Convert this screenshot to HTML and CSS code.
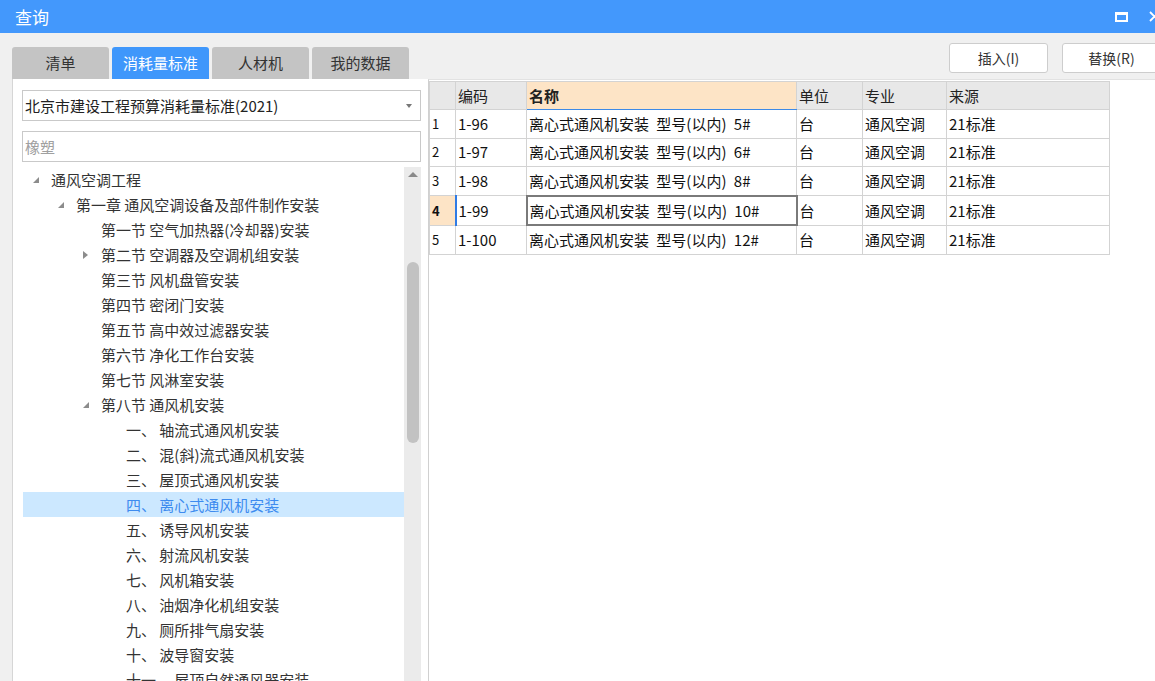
FILE: index.html
```html
<!DOCTYPE html>
<html lang="zh-CN">
<head>
<meta charset="utf-8">
<title>查询</title>
<link rel="stylesheet" href="styles.css">
</head>
<body>
<div class="window">
  <div class="titlebar">
    <span class="title">查询</span>
    <div class="controls">
      <span class="max-icon"></span>
      <svg class="close-icon" width="11" height="11" viewBox="0 0 11 11"><path d="M1 1 L10 10 M10 1 L1 10" stroke="#fff" stroke-width="1.8" fill="none"/></svg>
    </div>
  </div>
  <div class="main">
    <div class="left">
      <div class="tabs">
        <div class="tab">清单</div>
        <div class="tab active">消耗量标准</div>
        <div class="tab">人材机</div>
        <div class="tab">我的数据</div>
      </div>
      <div class="left-panel">
        <div class="select">
          <span>北京市建设工程预算消耗量标准(2021)</span>
          <span class="caret"></span>
        </div>
        <div class="search">橡塑</div>
        <div class="tree-wrap">
          <div class="tree">
            <div class="node l0"><span class="tw"><span class="exp"></span></span>通风空调工程</div>
            <div class="node l1"><span class="tw"><span class="exp"></span></span>第一章 通风空调设备及部件制作安装</div>
            <div class="node l2"><span class="tw"></span>第一节 空气加热器(冷却器)安装</div>
            <div class="node l2"><span class="tw"><span class="col"></span></span>第二节 空调器及空调机组安装</div>
            <div class="node l2"><span class="tw"></span>第三节 风机盘管安装</div>
            <div class="node l2"><span class="tw"></span>第四节 密闭门安装</div>
            <div class="node l2"><span class="tw"></span>第五节 高中效过滤器安装</div>
            <div class="node l2"><span class="tw"></span>第六节 净化工作台安装</div>
            <div class="node l2"><span class="tw"></span>第七节 风淋室安装</div>
            <div class="node l2"><span class="tw"><span class="exp"></span></span>第八节 通风机安装</div>
            <div class="node l3"><span class="tw"></span>一、 轴流式通风机安装</div>
            <div class="node l3"><span class="tw"></span>二、 混(斜)流式通风机安装</div>
            <div class="node l3"><span class="tw"></span>三、 屋顶式通风机安装</div>
            <div class="node l3 selected"><span class="tw"></span>四、 离心式通风机安装</div>
            <div class="node l3"><span class="tw"></span>五、 诱导风机安装</div>
            <div class="node l3"><span class="tw"></span>六、 射流风机安装</div>
            <div class="node l3"><span class="tw"></span>七、 风机箱安装</div>
            <div class="node l3"><span class="tw"></span>八、 油烟净化机组安装</div>
            <div class="node l3"><span class="tw"></span>九、 厕所排气扇安装</div>
            <div class="node l3"><span class="tw"></span>十、 波导窗安装</div>
            <div class="node l3"><span class="tw"></span>十一、 屋顶自然通风器安装</div>
          </div>
          <div class="scrollbar">
            <span class="up"></span>
            <span class="thumb"></span>
          </div>
        </div>
      </div>
    </div>
    <div class="right">
      <div class="toolbar">
        <button class="btn">插入(I)</button>
        <button class="btn">替换(R)</button>
      </div>
      <div class="right-panel">
        <table class="grid">
          <colgroup>
            <col class="c-num"><col class="c-code"><col class="c-name"><col class="c-unit"><col class="c-major"><col class="c-src">
          </colgroup>
          <thead>
            <tr><th></th><th>编码</th><th class="hl">名称</th><th>单位</th><th>专业</th><th>来源</th></tr>
          </thead>
          <tbody>
            <tr><td class="num">1</td><td>1-96</td><td>离心式通风机安装 型号(以内) 5#</td><td>台</td><td>通风空调</td><td>21标准</td></tr>
            <tr><td class="num">2</td><td>1-97</td><td>离心式通风机安装 型号(以内) 6#</td><td>台</td><td>通风空调</td><td>21标准</td></tr>
            <tr><td class="num">3</td><td>1-98</td><td>离心式通风机安装 型号(以内) 8#</td><td>台</td><td>通风空调</td><td>21标准</td></tr>
            <tr class="current"><td class="num">4</td><td class="code-cur">1-99</td><td class="cell-cur">离心式通风机安装 型号(以内) 10#</td><td>台</td><td>通风空调</td><td>21标准</td></tr>
            <tr><td class="num">5</td><td>1-100</td><td>离心式通风机安装 型号(以内) 12#</td><td>台</td><td>通风空调</td><td>21标准</td></tr>
          </tbody>
        </table>
      </div>
    </div>
  </div>
</div>
</body>
</html>
```

FILE: styles.css
```css
html, body {
  margin: 0;
  padding: 0;
  overflow: hidden;
  background: #f0f0f0;
}
body {
  font-family: "Noto Sans CJK SC", "Microsoft YaHei", sans-serif;
  color: #333;
}
.window {
  width: 1175px;
  height: 681px;
  display: flex;
  flex-direction: column;
  background: #f0f0f0;
}
.titlebar {
  height: 33px;
  flex: none;
  background: #4398fc;
  display: flex;
  align-items: center;
  justify-content: space-between;
  padding: 0 15px;
  color: #fff;
}
.title {
  font-size: 17px;
  line-height: 33px;
}
.controls {
  display: flex;
  align-items: center;
  gap: 21px;
}
.max-icon {
  width: 9px;
  height: 5px;
  border: 2px solid #fff;
  border-top-width: 3px;
}
.main {
  flex: 1;
  display: flex;
  min-height: 0;
}
.left {
  width: 416px;
  margin-left: 12px;
  display: flex;
  flex-direction: column;
}
.tabs {
  display: flex;
  gap: 3px;
  padding-top: 14px;
  height: 32px;
}
.tab {
  width: 97px;
  height: 32px;
  box-sizing: border-box;
  background: #c4c4c4;
  border-radius: 3px 3px 0 0;
  font-size: 15px;
  line-height: 32px;
  text-align: center;
  color: #333;
}
.tab.active {
  background: #3f97fb;
  color: #fff;
}
.left-panel {
  flex: 1;
  min-height: 0;
  background: #fff;
  border-left: 1px solid #d6d6d6;
  padding: 11px 7px 0 9px;
  display: flex;
  flex-direction: column;
}
.select {
  height: 31px;
  box-sizing: border-box;
  border: 1px solid #c9c9c9;
  display: flex;
  align-items: center;
  justify-content: space-between;
  padding: 0 8px 0 2px;
  font-size: 15px;
  color: #222;
}
.caret {
  width: 0;
  height: 0;
  border-left: 3.5px solid transparent;
  border-right: 3.5px solid transparent;
  border-top: 4px solid #777;
}
.search {
  height: 31px;
  box-sizing: border-box;
  border: 1px solid #c9c9c9;
  margin-top: 10px;
  padding: 0 2px;
  font-size: 15px;
  line-height: 29px;
  color: #a0a0a0;
}
.tree-wrap {
  flex: 1;
  min-height: 0;
  margin-top: 5px;
  display: flex;
  overflow: hidden;
  padding-left: 1px;
}
.tree {
  flex: 1;
  min-width: 0;
}
.node {
  height: 25px;
  line-height: 25px;
  font-size: 15px;
  color: #333;
  white-space: nowrap;
  display: flex;
  align-items: center;
}
.node.l0 { padding-left: 9px; }
.node.l1 { padding-left: 34px; }
.node.l2 { padding-left: 59px; }
.node.l3 { padding-left: 84px; }
.node.selected {
  background: #cce8ff;
  color: #3d8bef;
}
.tw {
  width: 19px;
  flex: none;
  display: flex;
  align-items: center;
}
.exp {
  width: 0;
  height: 0;
  border-style: solid;
  border-width: 0 0 6px 6px;
  border-color: transparent transparent #8c8c8c transparent;
  margin-left: 1px;
}
.col {
  width: 0;
  height: 0;
  border-top: 4px solid transparent;
  border-bottom: 4px solid transparent;
  border-left: 5px solid #8c8c8c;
  margin-left: 1px;
}
.scrollbar {
  width: 17px;
  flex: none;
  background: #ebebeb;
  display: flex;
  flex-direction: column;
  align-items: center;
}
.up {
  margin-top: 5px;
  width: 0;
  height: 0;
  border-left: 5px solid transparent;
  border-right: 5px solid transparent;
  border-bottom: 5px solid #8a8a8a;
}
.thumb {
  margin-top: 85px;
  width: 12px;
  height: 181px;
  border-radius: 6px;
  background: #c2c2c2;
}
.right {
  flex: 1;
  display: flex;
  flex-direction: column;
  min-width: 0;
}
.toolbar {
  height: 46px;
  flex: none;
  box-sizing: border-box;
  display: flex;
  justify-content: flex-end;
  gap: 14px;
  padding: 10px 14px 0 0;
}
.btn {
  width: 99px;
  height: 30px;
  background: #fff;
  border: 1px solid #cdcdcd;
  border-radius: 3px;
  font-family: "Noto Sans CJK SC", sans-serif;
  font-size: 14px;
  color: #333;
  padding: 0;
}
.right-panel {
  flex: 1;
  background: #fff;
  border-left: 1px solid #d0d0d0;
  border-top: 1px solid #e2e2e2;
  padding-top: 1px;
}
.grid {
  border-collapse: collapse;
  table-layout: fixed;
  width: 680px;
  font-size: 15px;
  color: #111;
}
.c-num { width: 26px; }
.c-code { width: 71px; }
.c-name { width: 270px; }
.c-unit { width: 66px; }
.c-major { width: 84px; }
.c-src { width: 163px; }
.grid th, .grid td {
  border: 1px solid #d3d3d3;
  padding: 0 0 0 2px;
  text-align: left;
  white-space: nowrap;
  overflow: hidden;
  line-height: 20px;
}
.grid th {
  height: 27px;
  background: #e8e8e8;
  font-weight: normal;
  color: #222;
}
.grid th.hl {
  background: #fde4c6;
  font-weight: bold;
  border-bottom: 1px solid #3d8ae6;
}
.grid td {
  height: 27.6px;
  background: #fff;
  word-spacing: 4px;
}
.grid td.num {
  font-size: 13px;
  padding-left: 2px;
}
.grid tr.current td.num {
  background: #fde4c6;
  font-weight: bold;
}
.grid td.code-cur {
  border-left: 2px solid #2f7be5;
}
.grid td.cell-cur {
  border: 2px solid #7a7a7a;
}
```
